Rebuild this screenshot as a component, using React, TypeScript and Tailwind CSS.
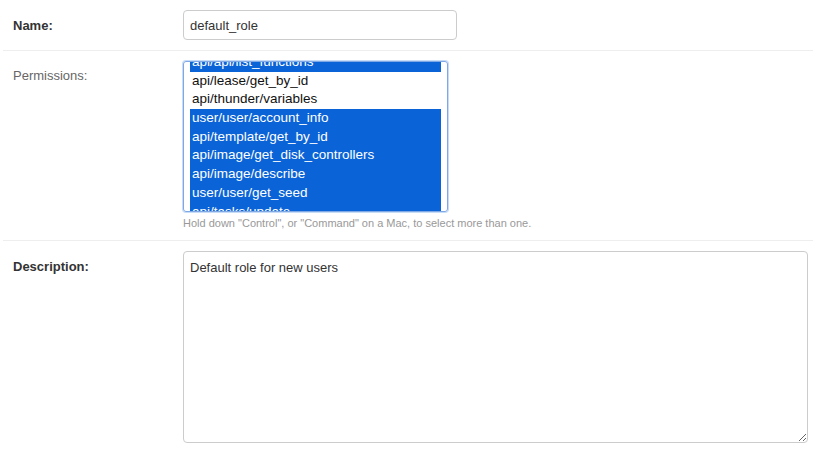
import React from 'react';

const permissions = [
  { name: 'api/api/list_functions', selected: true },
  { name: 'api/lease/get_by_id', selected: false },
  { name: 'api/thunder/variables', selected: false },
  { name: 'user/user/account_info', selected: true },
  { name: 'api/template/get_by_id', selected: true },
  { name: 'api/image/get_disk_controllers', selected: true },
  { name: 'api/image/describe', selected: true },
  { name: 'user/user/get_seed', selected: true },
  { name: 'api/tasks/update', selected: true },
];

const App: React.FC = () => {
  return (
    <div className="min-h-screen bg-white pl-[3px] text-[13px] text-[#333] font-['Liberation_Sans',Arial,sans-serif]">
      {/* Name */}
      <div className="flex border-b border-[#eee] py-[10px] pl-[10px]">
        <label className="w-[170px] shrink-0 pt-[8px] leading-[16px] font-bold text-[#333]">Name:</label>
        <input
          type="text"
          defaultValue="default_role"
          className="h-[30px] w-[274px] rounded-[4px] border border-[#ccc] px-[6px] text-[13px] text-[#333] outline-none"
        />
      </div>

      {/* Permissions */}
      <div className="flex border-b border-[#eee] py-[10px] pl-[10px]">
        <label className="w-[170px] shrink-0 pt-[7px] leading-[16px] text-[#666]">Permissions:</label>
        <div className="flex flex-col">
          <div className="h-[151px] w-[265px] overflow-hidden rounded-[3px] border border-[#7fa8e4] shadow-[0_0_0_1px_#c7dcf7] px-[6px]">
            <ul className="-mt-[9px]">
              {permissions.map((p) => (
                <li
                  key={p.name}
                  className={
                    p.selected
                      ? 'h-[18.7px] leading-[18.7px] px-[2px] text-[13.5px] whitespace-nowrap bg-[#0a63d7] text-white'
                      : 'h-[18.7px] leading-[18.7px] px-[2px] text-[13.5px] whitespace-nowrap text-[#111]'
                  }
                >
                  {p.name}
                </li>
              ))}
            </ul>
          </div>
          <p className="mt-[4px] text-[11px] leading-[14px] text-[#999]">
            Hold down "Control", or "Command" on a Mac, to select more than one.
          </p>
        </div>
      </div>

      {/* Description */}
      <div className="flex py-[10px] pl-[10px]">
        <label className="w-[170px] shrink-0 pt-[8px] leading-[16px] font-bold text-[#333]">Description:</label>
        <textarea
          defaultValue="Default role for new users"
          className="h-[192px] w-[625px] rounded-[4px] border border-[#ccc] px-[6px] py-[8px] text-[13px] leading-[16px] text-[#333] outline-none"
        />
      </div>
    </div>
  );
};

export default App;
